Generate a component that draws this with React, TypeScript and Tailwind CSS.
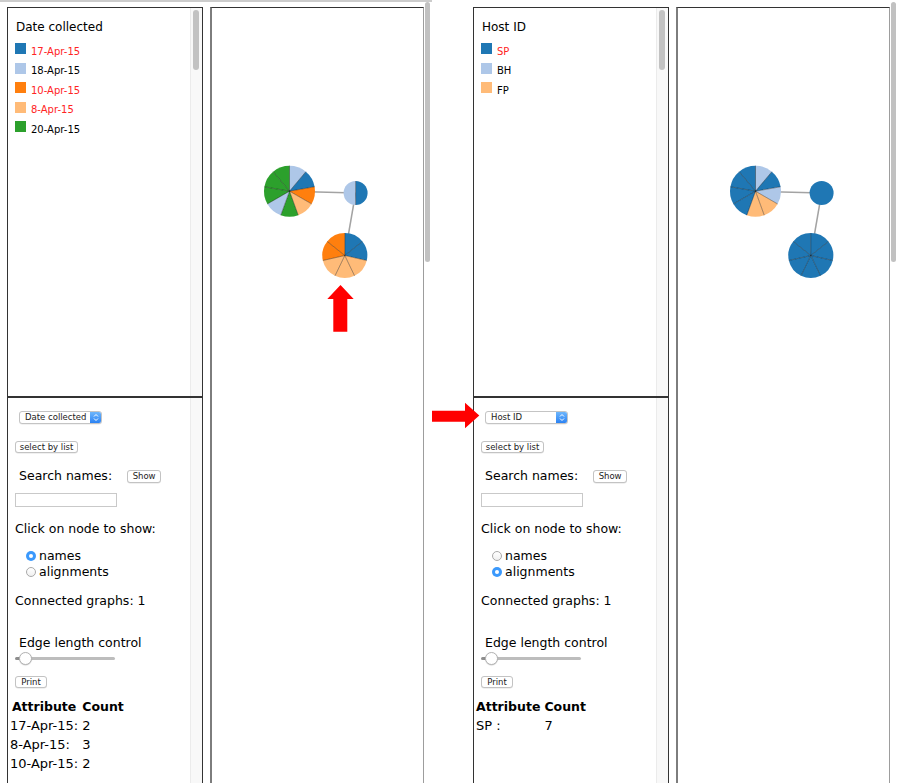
import React from "react";

const BLUE = "#1f77b4";
const LB = "#aec7e8";
const OR = "#ff7f0e";
const LO = "#ffbb78";
const GR = "#2ca02c";

function Pie({ cx, cy, r, colors }: { cx: number; cy: number; r: number; colors: string[] }) {
  const n = colors.length;
  const pt = (a: number) => [cx + r * Math.sin(a), cy - r * Math.cos(a)];
  return (
    <g>
      {colors.map((c, i) => {
        const a0 = (i / n) * Math.PI * 2;
        const a1 = ((i + 1) / n) * Math.PI * 2;
        const [x0, y0] = pt(a0);
        const [x1, y1] = pt(a1);
        const large = a1 - a0 > Math.PI ? 1 : 0;
        return (
          <path
            key={i}
            d={`M${cx},${cy} L${x0},${y0} A${r},${r} 0 ${large} 1 ${x1},${y1} Z`}
            fill={c}
          />
        );
      })}
      {n > 1 &&
        colors.map((_, i) => {
          const [x, y] = pt((i / n) * Math.PI * 2);
          return (
            <line key={"l" + i} x1={cx} y1={cy} x2={x} y2={y} stroke="rgba(0,0,0,0.45)" strokeWidth={0.8} />
          );
        })}
    </g>
  );
}

type GraphProps = { a: string[]; b: string[] | null; c: string[]; arrow: boolean };

function Graph({ a, b, c, arrow }: GraphProps) {
  const A = { x: 77.5, y: 183.2 };
  const B = { x: 143.6, y: 185 };
  const Cn = { x: 132.8, y: 247.5 };
  return (
    <svg width={211} height={775} className="block">
      <line x1={A.x} y1={A.y} x2={B.x} y2={B.y} stroke="#a3a3a3" strokeWidth={1.5} />
      <line x1={B.x} y1={B.y} x2={Cn.x} y2={Cn.y} stroke="#a3a3a3" strokeWidth={1.5} />
      <Pie cx={A.x} cy={A.y} r={25.5} colors={a} />
      {b ? (
        <Pie cx={B.x} cy={B.y} r={12} colors={b} />
      ) : (
        <circle cx={B.x} cy={B.y} r={12} fill={BLUE} />
      )}
      <Pie cx={Cn.x} cy={Cn.y} r={22.5} colors={c} />
      {arrow && (
        <polygon
          points="121.3,323.7 121.3,291 115.3,291 128.5,277 141.7,291 135.3,291 135.3,323.7"
          fill="#ff0000"
        />
      )}
    </svg>
  );
}

function MacButton({ label, w, h = 13, className = "" }: { label: string; w: number; h?: number; className?: string }) {
  return (
    <div
      className={"flex items-center justify-center rounded-[3px] border border-[#c3c3c3] bg-white text-[8.5px] leading-none text-[#222] shadow-[0_0.5px_0.5px_rgba(0,0,0,0.12)] " + className}
      style={{ width: w, height: h }}
    >
      {label}
    </div>
  );
}

function Radio({ checked }: { checked: boolean }) {
  return checked ? (
    <span className="flex h-[10px] w-[10px] items-center justify-center rounded-full bg-[#3b99fc]">
      <span className="h-[4px] w-[4px] rounded-full bg-white" />
    </span>
  ) : (
    <span className="h-[10px] w-[10px] rounded-full border border-[#a9a9a9] bg-gradient-to-b from-white to-[#f0f0f0]" />
  );
}

function Track({ thumb }: { thumb: boolean }) {
  return (
    <div className="w-[12px] shrink-0 border-l border-[#ebebeb] bg-[#f8f8f8]">
      {thumb && <div className="ml-[2px] mt-[2px] h-[60px] w-[6px] rounded-full bg-[#c2c2c2]" />}
    </div>
  );
}

type LegendItem = { label: string; color: string; red: boolean };

type ScreenProps = {
  topLine: boolean;
  title: string;
  legend: LegendItem[];
  select: string;
  namesChecked: boolean;
  rows: [string, string][];
  graph: GraphProps;
};

function Screen({ topLine, title, legend, select, namesChecked, rows, graph }: ScreenProps) {
  return (
    <div className={"flex h-[783px] w-[432px] shrink-0 " + (topLine ? "border-t-2 border-[#cccccc]" : "")}>
      <div className={"flex flex-1 pl-[7px] " + (topLine ? "pt-[5px]" : "pt-[7px]")}>
        {/* left column */}
        <div className="flex w-[196px] shrink-0 flex-col">
          <div className="flex h-[390px] border border-[#333]">
            <div className="flex-1 pl-[7px]">
              <div className="mt-[12px] h-[14px] pl-[1px] text-[12px] leading-[14px] text-black">{title}</div>
              <div className="mt-[9px]">
                {legend.map((it) => (
                  <div key={it.label} className="flex h-[19.5px] items-start">
                    <span className="h-[11px] w-[11px] shrink-0" style={{ background: it.color }} />
                    <span
                      className={"ml-[5px] mt-[2.5px] text-[10px] leading-[12px] " + (it.red ? "text-[#ff2424]" : "text-black")}
                    >
                      {it.label}
                    </span>
                  </div>
                ))}
              </div>
            </div>
            <Track thumb={true} />
          </div>
          <div className="flex flex-1 border-x border-t border-[#333]">
            <div className="flex flex-1 flex-col items-start text-black">
              {/* select */}
              <div className="ml-[11px] mt-[13px] flex h-[13px] w-[83px] items-center overflow-hidden rounded-[3px] border border-[#c4c4c4] bg-white shadow-[0_0.5px_0.5px_rgba(0,0,0,0.1)]">
                <span className="flex-1 pl-[5px] text-[8.5px] leading-none text-[#222]">{select}</span>
                <span className="flex h-full w-[11px] items-center justify-center bg-gradient-to-b from-[#6db6fc] to-[#2a82f3]">
                  <svg width="6" height="9" viewBox="0 0 6 9">
                    <path d="M1 3.5 L3 1.5 L5 3.5 M1 5.5 L3 7.5 L5 5.5" stroke="white" strokeWidth="1" fill="none" />
                  </svg>
                </span>
              </div>
              <MacButton label="select by list" w={63} h={12} className="ml-[7px] mt-[17px]" />
              <div className="ml-[11px] mt-[15px] flex h-[15px] items-start">
                <span className="text-[12.5px] leading-[15px]">Search names:</span>
                <MacButton label="Show" w={34} h={13} className="ml-[15px] mt-[2px]" />
              </div>
              <input
                readOnly
                className="ml-[7px] mt-[10px] block h-[14px] w-[102px] border border-[#c9c9c9] bg-white outline-none"
              />
              <div className="ml-[7px] mt-[14px] text-[12.5px] leading-[15px]">Click on node to show:</div>
              <div className="ml-[18px] mt-[12px] flex h-[16px] items-center">
                <Radio checked={namesChecked} />
                <span className="ml-[3px] text-[12.5px] leading-[16px]">names</span>
              </div>
              <div className="ml-[18px] flex h-[16px] items-center">
                <Radio checked={!namesChecked} />
                <span className="ml-[3px] text-[12.5px] leading-[16px]">alignments</span>
              </div>
              <div className="ml-[7px] mt-[13px] text-[12.5px] leading-[15px]">Connected graphs: 1</div>
              <div className="ml-[11px] mt-[27px] text-[12.5px] leading-[15px]">Edge length control</div>
              <div className="relative ml-[7px] mt-[2px] flex h-[13px] w-[100px] items-center">
                <div className="h-[3px] w-[8px] rounded-l-full bg-[#8e8e8e]" />
                <div className="h-[3px] flex-1 rounded-r-full bg-[#bdbdbd]" />
                <div className="absolute left-[4px] top-0 h-[13px] w-[13px] rounded-full border border-[#b3b3b3] bg-white shadow-[0_0.5px_1px_rgba(0,0,0,0.2)]" />
              </div>
              <MacButton label="Print" w={32} h={12} className="ml-[7px] mt-[11px]" />
              <table className="mt-[8px] border-separate border-spacing-[2px]">
                <thead>
                  <tr>
                    <th className="p-0 pr-[2px] text-center text-[12.5px] font-bold leading-[17px]">Attribute</th>
                    <th className="p-0 text-center text-[12.5px] font-bold leading-[17px]">Count</th>
                  </tr>
                </thead>
                <tbody>
                  {rows.map((r) => (
                    <tr key={r[0]}>
                      <td className="p-0 pr-[2px] text-left text-[13px] leading-[17px]">{r[0]}</td>
                      <td className="p-0 text-left text-[13px] leading-[17px]">{r[1]}</td>
                    </tr>
                  ))}
                </tbody>
              </table>
            </div>
            <Track thumb={false} />
          </div>
        </div>
        {/* graph panel */}
        <div className="ml-[7px] w-[214px] shrink-0 overflow-hidden border-t border-l-2 border-r border-t-[#333] border-l-[#7d7d7d] border-r-[#9d9d9d] bg-white">
          <Graph {...graph} />
        </div>
      </div>
      <div className="w-[8px] shrink-0 pl-[1px]">
        <div className={"h-[260px] w-[5px] rounded-full bg-[#c1c1c1] " + (topLine ? "mt-0" : "mt-[2px]")} />
      </div>
    </div>
  );
}

export default function App() {
  return (
    <div className="relative flex h-[783px] w-[898px] overflow-hidden bg-white font-['DejaVu_Sans',sans-serif]">
      <Screen
        topLine={true}
        title="Date collected"
        legend={[
          { label: "17-Apr-15", color: BLUE, red: true },
          { label: "18-Apr-15", color: LB, red: false },
          { label: "10-Apr-15", color: OR, red: true },
          { label: "8-Apr-15", color: LO, red: true },
          { label: "20-Apr-15", color: GR, red: false },
        ]}
        select="Date collected"
        namesChecked={true}
        rows={[
          ["17-Apr-15:", "2"],
          ["8-Apr-15:", "3"],
          ["10-Apr-15:", "2"],
        ]}
        graph={{
          a: [LB, BLUE, OR, LO, GR, LB, GR, GR, GR],
          b: [BLUE, LB],
          c: [BLUE, BLUE, LO, LO, LO, OR, OR],
          arrow: true,
        }}
      />
      <div className="w-[34px] shrink-0" />
      <Screen
        topLine={false}
        title="Host ID"
        legend={[
          { label: "SP", color: BLUE, red: true },
          { label: "BH", color: LB, red: false },
          { label: "FP", color: LO, red: false },
        ]}
        select="Host ID"
        namesChecked={false}
        rows={[["SP :", "7"]]}
        graph={{
          a: [LB, BLUE, LB, LO, LO, BLUE, BLUE, BLUE, BLUE],
          b: null,
          c: [BLUE, BLUE, BLUE, BLUE, BLUE, BLUE, BLUE],
          arrow: false,
        }}
      />
      <svg className="absolute left-[430px] top-[400px]" width="52" height="32">
        <polygon points="2,10.7 35,10.7 35,2.7 49.3,15.5 35,28.3 35,21.7 2,21.7" fill="#ff0000" />
      </svg>
    </div>
  );
}
